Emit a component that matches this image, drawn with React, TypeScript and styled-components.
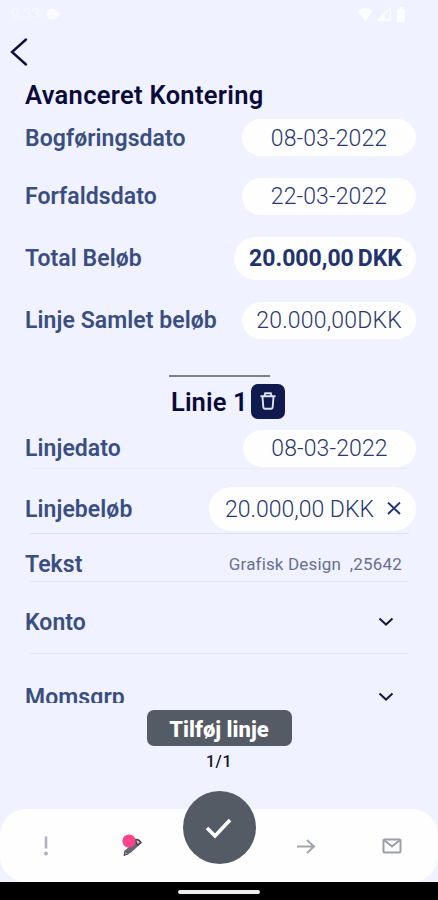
import React from "react";
import styled, { createGlobalStyle } from "styled-components";

const GlobalStyle = createGlobalStyle`
  * { box-sizing: border-box; }
  body { margin: 0; background: #f0f3ff; font-family: Roboto, "Liberation Sans", sans-serif; }
`;

const Screen = styled.div`
  width: 438px;
  height: 900px;
  display: flex;
  flex-direction: column;
  overflow: hidden;
  background: #f0f3ff;
`;

const StatusBar = styled.div`
  height: 28px;
  padding: 0 29px 0 11px;
  display: flex;
  align-items: center;
  justify-content: space-between;
  color: #f7f9ff;
  font-size: 15px;
`;

const StatusGroup = styled.div`
  display: flex;
  align-items: center;
  gap: 4px;
`;

const BackButton = styled.button`
  width: 40px;
  height: 54px;
  padding: 9px 0 0 9px;
  border: 0;
  background: none;
  display: flex;
  align-items: flex-start;
`;

const Title = styled.h1`
  margin: 0 0 0 25px;
  height: 28px;
  line-height: 27px;
  font-size: 25.5px;
  font-weight: 600;
  letter-spacing: 0.3px;
  color: #0b0b3b;
  white-space: nowrap;
`;

const Form = styled.main`
  height: 593px;
  padding: 0 22px 0 25px;
  overflow: hidden;
`;

const Row = styled.div<{ $height: number; $gap?: number }>`
  height: ${(p) => p.$height}px;
  margin-top: ${(p) => p.$gap ?? 0}px;
  display: flex;
  align-items: center;
  justify-content: space-between;
`;

const Label = styled.span`
  padding-top: 2px;
  font-size: 23px;
  line-height: 28px;
  font-weight: 600;
  letter-spacing: 0.07px;
  color: #3a4e82;
  white-space: nowrap;
`;

const Pill = styled.div<{ $width: number; $height?: number; $bold?: boolean; $end?: boolean; $spacing?: number }>`
  width: ${(p) => p.$width}px;
  height: ${(p) => p.$height ?? 37}px;
  padding: 1px 14px 0;
  border-radius: 22px;
  background: #fefeff;
  display: flex;
  align-items: center;
  justify-content: ${(p) => (p.$end ? "flex-end" : "center")};
  gap: 12px;
  font-size: 23px;
  font-weight: ${(p) => (p.$bold ? 700 : 300)};
  letter-spacing: ${(p) => p.$spacing ?? 0}px;
  color: ${(p) => (p.$bold ? "#20336e" : "#29386f")};
  white-space: nowrap;
`;

const Currency = styled.span`
  margin-left: -8px;
`;

const Rule = styled.div<{ $color?: string }>`
  height: 1px;
  margin: 0 7px 0 5px;
  background: ${(p) => p.$color ?? "#e2e7f8"};
`;

const SectionBar = styled.div`
  width: 101px;
  height: 2px;
  margin: 24px 0 0 144px;
  background: #7f827f;
`;

const SectionHeader = styled.div`
  height: 36px;
  margin: 6px 0 0 146px;
  display: flex;
  align-items: center;
  gap: 4px;
`;

const SectionTitle = styled.h2`
  margin: 0;
  padding-top: 2px;
  width: 76px;
  font-size: 25.5px;
  font-weight: 600;
  letter-spacing: 0.1px;
  color: #0b0b3b;
  white-space: nowrap;
`;

const DeleteButton = styled.button`
  width: 34px;
  height: 35px;
  padding: 0 0 1px;
  border: 0;
  border-radius: 7px;
  background: #111a4f;
  display: grid;
  place-items: center;
`;

const Note = styled.span`
  margin-right: 14px;
  font-size: 17px;
  font-weight: 400;
  letter-spacing: 0.17px;
  color: #68708f;
  white-space: pre;
`;

const Caret = styled.svg`
  margin-right: 22px;
`;

const Footer = styled.footer`
  flex: 1;
  padding-top: 7px;
  display: flex;
  flex-direction: column;
  align-items: center;
`;

const AddButton = styled.button`
  width: 145px;
  height: 36px;
  padding: 2px 0 0;
  border: 0;
  border-radius: 7px;
  background: #555b65;
  color: #fff;
  font-family: inherit;
  font-size: 22px;
  font-weight: 800;
  white-space: nowrap;
`;

const PageCount = styled.div`
  height: 30px;
  line-height: 32px;
  font-size: 16px;
  font-weight: 500;
  letter-spacing: 0.6px;
  color: #10132f;
`;

const NavBar = styled.nav`
  width: 100%;
  height: 73px;
  margin-top: 33px;
  border-radius: 26px;
  background: #fefeff;
  display: grid;
  grid-template-columns: 92px 80px 94px 80px 92px;
  align-items: center;
  justify-items: center;
`;

const NavItem = styled.button`
  padding: 0;
  border: 0;
  background: none;
  display: grid;
  place-items: center;
`;

const ConfirmButton = styled.button`
  width: 73px;
  height: 73px;
  margin-top: -36px;
  padding: 0;
  border: 0;
  border-radius: 50%;
  background: #555b65;
  display: grid;
  place-items: center;
`;

const SystemBar = styled.div`
  width: 100%;
  height: 18px;
  background: #000;
  display: grid;
  place-items: center;
`;

const HomeHandle = styled.div`
  width: 82px;
  height: 4px;
  margin-top: 2px;
  border-radius: 2px;
  background: #ededed;
`;

const Chevron = () => (
  <Caret width="16" height="10" viewBox="0 0 16 10" fill="none">
    <path d="M1.5 1.5 8 7.600l6.500-6.100" stroke="#17183f" strokeWidth="2" />
  </Caret>
);

export default function App() {
  return (
    <Screen>
      <GlobalStyle />
      <StatusBar>
        <StatusGroup>
          <span>9:33</span>
          <svg width="17" height="14" viewBox="0 0 17 14" fill="#fbfcff">
            <circle cx="8" cy="7" r="5.5" />
            <path d="m12 4 5 3-5 4z" />
          </svg>
        </StatusGroup>
        <StatusGroup>
          <svg width="15" height="13" viewBox="0 0 15 13" fill="#fdfeff">
            <path d="M0 3Q7.500-3 15 3L7.500 13Z" />
          </svg>
          <svg width="14" height="14" viewBox="0 0 14 14" fill="none" stroke="#fdfeff" strokeWidth="1.500">
            <path d="M1 13 13 1v12z" />
            <path d="M7 8v5H2z" fill="#fdfeff" />
          </svg>
          <svg width="14" height="15" viewBox="0 0 14 15" fill="#fdfeff">
            <path d="M2 2h2V0h4v2h2v13H2z" />
          </svg>
        </StatusGroup>
      </StatusBar>

      <BackButton aria-label="Tilbage">
        <svg width="20" height="30" viewBox="0 0 20 30" fill="none">
          <path d="M17 2.500 3 15l14 12.500" stroke="#10103f" strokeWidth="2.400" strokeLinecap="round" />
        </svg>
      </BackButton>
      <Title>Avanceret Kontering</Title>

      <Form>
        <Row $height={55}>
          <Label>Bogføringsdato</Label>
          <Pill $width={174} $spacing={0.12}>08-03-2022</Pill>
        </Row>
        <Row $height={62}>
          <Label>Forfaldsdato</Label>
          <Pill $width={174} $spacing={0.12}>22-03-2022</Pill>
        </Row>
        <Row $height={62}>
          <Label>Total Beløb</Label>
          <Pill $width={182} $height={43} $bold $end>
            <span>20.000,00</span>
            <Currency>DKK</Currency>
          </Pill>
        </Row>
        <Row $height={62}>
          <Label>Linje Samlet beløb</Label>
          <Pill $width={174} $end $spacing={0.2}>20.000,00DKK</Pill>
        </Row>

        <SectionBar />
        <SectionHeader>
          <SectionTitle>Linie 1</SectionTitle>
          <DeleteButton aria-label="Slet linje">
            <svg width="16" height="18" viewBox="0 0 16 18" fill="none" stroke="#dfe2ef" strokeWidth="1.900">
              <path d="M.5 4.200h15M4.500 3.800 5.200 1.300h5.600l.7 2.500M2.500 4.500l.8 10.500q.1 1.700 1.500 1.700h6.400q1.400 0 1.500-1.700l.8-10.500" />
            </svg>
          </DeleteButton>
        </SectionHeader>

        <Row $height={40} $gap={9}>
          <Label>Linjedato</Label>
          <Pill $width={173} $spacing={0.12}>08-03-2022</Pill>
        </Row>
        <Rule $color="#e9edfb" />
        <Row $height={49} $gap={15}>
          <Label>Linjebeløb</Label>
          <Pill $width={207} $height={44} $end>
            <span>20.000,00 DKK</span>
            <svg width="16" height="14" viewBox="0 0 16 14" fill="none">
              <path d="m2 .5 12 11.500M14 .5 2 12" stroke="#20346f" strokeWidth="1.900" />
            </svg>
          </Pill>
        </Row>
        <Rule $color="#dbe4f4" />
        <Row $height={34} $gap={13}>
          <Label>Tekst</Label>
          <Note>Grafisk Design  ,25642</Note>
        </Row>
        <Rule />
        <Row $height={62} $gap={9}>
          <Label>Konto</Label>
          <Chevron />
        </Row>
        <Rule />
        <Row $height={60} $gap={13}>
          <Label>Momsgrp</Label>
          <Chevron />
        </Row>
      </Form>

      <Footer>
        <AddButton>Tilføj linje</AddButton>
        <PageCount>1/1</PageCount>
        <NavBar>
          <NavItem aria-label="Advarsler">
            <svg width="8" height="22" viewBox="0 0 8 22">
              <path d="M4 1.500v12" stroke="#b0b2c2" strokeWidth="2.600" />
              <circle cx="4" cy="18.500" r="2" fill="#b0b2c2" />
            </svg>
          </NavItem>
          <NavItem aria-label="Rediger">
            <svg width="24" height="24" viewBox="0 0 24 24">
              <path d="m4 21 1.500-5L15.500 6.500Q18 5 21.500 9L10.500 19z" fill="#66686e" />
              <path d="m4 21.500 1-5 3.500 3.200z" fill="#999" stroke="#44464b" />
              <path d="M15 5.500q4-.5 6 3L17.500 11z" fill="#d0d0d2" stroke="#44464b" strokeWidth="1.500" />
              <circle cx="9" cy="7" r="6.600" fill="#fc438b" />
            </svg>
          </NavItem>
          <ConfirmButton aria-label="Godkend">
            <svg width="30" height="24" viewBox="0 0 30 24" fill="none">
              <path d="m3 12 8 8L26 4" stroke="#fff" strokeWidth="3.600" />
            </svg>
          </ConfirmButton>
          <NavItem aria-label="Videre">
            <svg width="20" height="16" viewBox="0 0 20 16" fill="none" stroke="#a2a5ad" strokeWidth="2">
              <path d="M1 8.500h17M11 2 18 8.500 11 15" />
            </svg>
          </NavItem>
          <NavItem aria-label="Beskeder">
            <svg width="20" height="16" viewBox="0 0 20 16" fill="none" stroke="#9b9ea8" strokeWidth="2">
              <rect x="1.500" y="1.500" width="17" height="13" rx="1" />
              <path d="m2 2 8 6.500L18 2" />
            </svg>
          </NavItem>
        </NavBar>
        <SystemBar>
          <HomeHandle />
        </SystemBar>
      </Footer>
    </Screen>
  );
}
